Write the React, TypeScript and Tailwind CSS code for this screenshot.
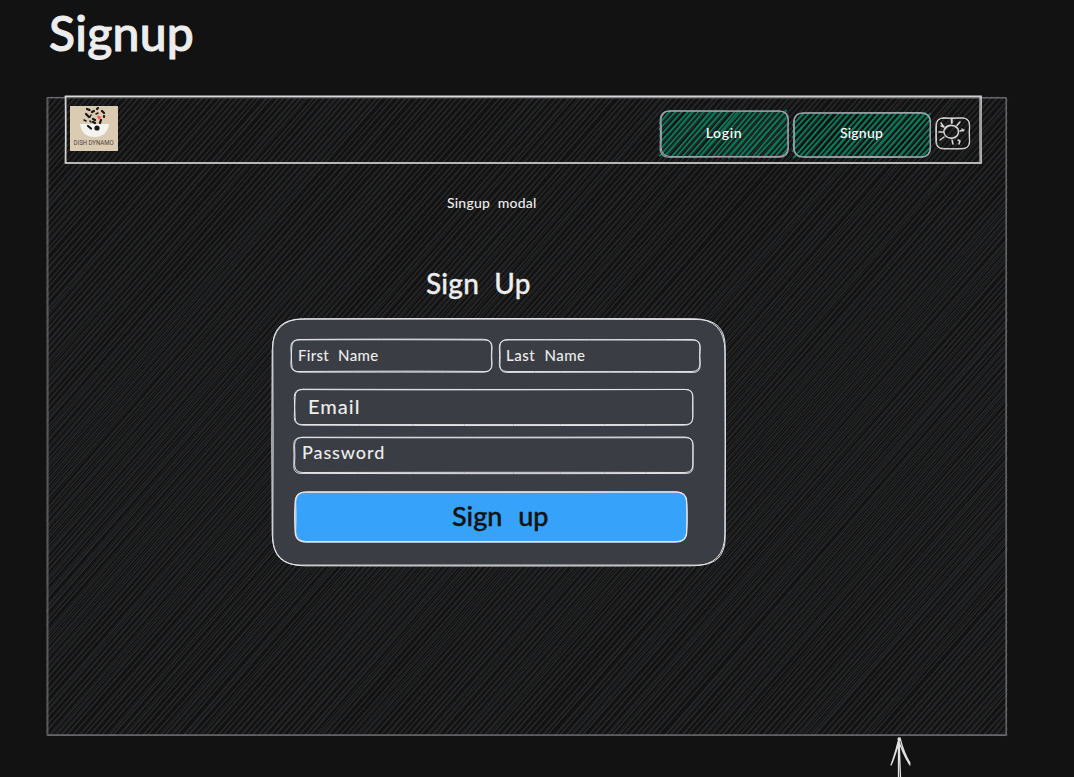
import type { ReactNode } from "react";

const HAND = "font-['Virgil','Excalifont','Lato',cursive] font-medium leading-none whitespace-nowrap";

function rng(seed: number) {
  let s = seed * 7919 + 17;
  return () => {
    s = (s * 16807) % 2147483647;
    return s / 2147483647;
  };
}

function roughRect(w: number, h: number, r: number, seed: number) {
  const rand = rng(seed);
  const j = () => (rand() - 0.5) * 1.5;
  const x0 = 0.5 + j(), x1 = w - 0.2 + j(), y0 = 0.5 + j(), y1 = h - 0.2 + j();
  const f = (n: number) => n.toFixed(1);
  return [
    `M${f(x0 + r)} ${f(y0)}`,
    `Q${f(w * 0.4)} ${f(y0 + j())} ${f(x1 - r)} ${f(y0 + j() * 0.4)}`,
    `Q${f(x1)} ${f(y0)} ${f(x1)} ${f(y0 + r)}`,
    `Q${f(x1 + j())} ${f(h * 0.5)} ${f(x1)} ${f(y1 - r)}`,
    `Q${f(x1)} ${f(y1)} ${f(x1 - r)} ${f(y1)}`,
    `Q${f(w * 0.6)} ${f(y1 + j())} ${f(x0 + r)} ${f(y1)}`,
    `Q${f(x0)} ${f(y1)} ${f(x0)} ${f(y1 - r)}`,
    `Q${f(x0 + j())} ${f(h * 0.5)} ${f(x0)} ${f(y0 + r)}`,
    `Q${f(x0)} ${f(y0)} ${f(x0 + r)} ${f(y0)}`,
  ].join("");
}

function hatchPath(w: number, h: number, gap: number, seed: number, slope: number, skip: number) {
  const rand = rng(seed);
  let d = "";
  for (let x = gap + skip; x < w + h / slope - skip; x += gap) {
    const j = () => (rand() - 0.5) * 1.6;
    const top = x > w ? [w, (x - w) * slope] : [x, 0];
    const bx = x - h / slope;
    const bottom = bx < 0 ? [0, x * slope] : [bx, h];
    d += `M${(top[0] + j()).toFixed(1)} ${(top[1] + j()).toFixed(1)}L${(bottom[0] + j()).toFixed(1)} ${(bottom[1] + j()).toFixed(1)}`;
  }
  return d;
}

type SketchProps = {
  w: number;
  h: number;
  r?: number;
  seed: number;
  stroke?: string;
  width?: number;
  hatch?: string;
  gap?: number;
  hatchWidth?: number;
};

function Sketch({ w, h, r = 0, seed, stroke = "#e3e3e8", width = 1, hatch, gap = 6, hatchWidth = 1 }: SketchProps) {
  const skip = r * 0.5;
  return (
    <svg className="pointer-events-none absolute inset-0 overflow-visible" width={w} height={h} fill="none" strokeLinecap="round">
      {hatch && <path d={hatchPath(w, h, gap, seed, 1.14, skip)} stroke={hatch} strokeWidth={hatchWidth} />}
      {hatch && <path d={hatchPath(w, h, gap, seed + 5, 1.15, skip)} stroke={hatch} strokeWidth={hatchWidth * 0.75} />}
      <path d={roughRect(w, h, r, seed)} stroke={stroke} strokeWidth={width} />
      <path d={roughRect(w, h, r * 1.15, seed + 9)} stroke={stroke} strokeWidth={width} />
    </svg>
  );
}

function Field({ className, children, w, h, seed }: { className: string; children: ReactNode; w: number; h: number; seed: number }) {
  return (
    <label className={`relative flex text-[#ededed] ${className}`}>
      <Sketch w={w} h={h} r={7} seed={seed} />
      {children}
    </label>
  );
}

function Logo() {
  return (
    <div className="flex h-[45px] w-12 shrink-0 flex-col items-center bg-[#dccbb3]">
      <svg width="48" height="33" viewBox="0 0 48 33">
        <path d="M10 18H39C38 27 32 31 24.500 31S11 27 10 18Z" fill="#f4f3f1" />
        <g stroke="#171613" strokeWidth="2.200" strokeLinecap="round" fill="none">
          <path d="M17 3l2.500 1M16 8l3 3M22 6l2-1M28 2l-1 1M32 5l2 2M23 13l2 1M18 20l3 2.500M31 14l-1 3M25 17l-2-1M34 10v1" />
          <path d="M14 14l2 1M21 9l-1 2M26 8l2-1M20 15l1 1" strokeWidth="1.500" />
        </g>
        <circle cx="27" cy="22" r="2.600" fill="#171613" />
        <path d="M27 10.500q2-2 2 0 2-1 2 1l-2 2.500z" fill="#ff5147" />
      </svg>
      <span className="scale-x-[0.93] scale-y-110 font-['Roboto',sans-serif] text-[6.500px] leading-[9px] whitespace-nowrap text-[#4b443b]">DISH DYNAMO</span>
    </div>
  );
}

function Sun() {
  return (
    <svg className="absolute inset-0 overflow-visible" width="34" height="32" fill="none" stroke="#d8d8d8" strokeWidth="1.500" strokeLinecap="round">
      <path d="M10 10C13 7 20 8 22 12 24 18 19 22 14 21 8 20 6 14 10 10ZM9 12C12 7 19 8 21 11" />
      <path d="M15.500 1.500V6M16 2v4M24 5l-3 3.500M24 14l4-1M26 12l1 2M22 23l2 1M24 24l-1 3M16 23l1 4M8 20l-4 3M7 15H3M8 10L5 6M5 9l3 1" />
    </svg>
  );
}

export default function App() {
  return (
    <main className="h-[777px] w-[1074px] overflow-hidden bg-[#121212] text-[#ededed]">
      <header className="h-[97px] pt-[9px] pl-[49px]">
        <h1 className={`${HAND} text-[48px] tracking-[0.3px] [-webkit-text-stroke:1px_currentColor]`}>Signup</h1>
      </header>

      <section className="relative ml-[47px] flex h-[638px] w-[960px] flex-col">
        <Sketch w={960} h={638} seed={3} stroke="#77777a" width={0.8} hatch="#28292b" gap={5.8} hatchWidth={1.3} />

        <nav className="relative -mt-px ml-[18px] flex h-[67px] w-[916px] shrink-0 pt-[10px] pl-[5px]">
          <Sketch w={916} h={67} seed={12} stroke="#dcdcdc" width={1.1} />
          <Logo />
          <button className={`relative mt-[5px] ml-[542px] flex h-[46px] w-32 justify-center pt-[15px] text-white ${HAND} text-[14px] tracking-[0.7px]`}>
            <Sketch w={128} h={46} r={9} seed={21} stroke="#9da3aa" width={1.1} hatch="#087c59" gap={5.8} hatchWidth={1.6} />
            <span className="relative">Login</span>
          </button>
          <button className={`relative mt-[7px] ml-[5px] flex h-[44px] w-[137px] justify-center pt-[13px] text-white ${HAND} text-[14px] tracking-[0.2px]`}>
            <Sketch w={137} h={44} r={9} seed={32} stroke="#9da3aa" width={1.1} hatch="#087c59" gap={5.8} hatchWidth={1.6} />
            <span className="relative">Signup</span>
          </button>
          <button className="relative mt-[11px] ml-[6px] h-8 w-[34px]" aria-label="Theme">
            <Sketch w={34} h={32} r={7} seed={8} stroke="#d8d8d8" />
            <Sun />
          </button>
        </nav>

        <p className={`relative mt-[33px] ml-[400px] ${HAND} text-[14px] tracking-[0.2px] [word-spacing:4px]`}>Singup modal</p>
        <h2 className={`relative mt-[59px] ml-[379px] ${HAND} text-[28px] tracking-[0.2px] [word-spacing:8px] [-webkit-text-stroke:0.3px_currentColor]`}>Sign Up</h2>

        <form className="relative mt-[21px] ml-[225px] flex h-[248px] w-[453px] shrink-0 flex-col rounded-[28px] bg-[#3a3d44] pt-[21px] pl-[19px]">
          <Sketch w={453} h={248} r={28} seed={44} />
          <div className="flex gap-[7px]">
            <Field className="h-[33px] w-[201px] pt-[9px] pl-[7px]" w={201} h={33} seed={50}>
              <span className={`${HAND} text-[15px] tracking-[0.3px] [word-spacing:5px]`}>First Name</span>
            </Field>
            <Field className="h-[33px] w-[201px] pt-[9px] pl-[7px]" w={201} h={33} seed={61}>
              <span className={`${HAND} text-[15px] tracking-[0.5px] [word-spacing:5px]`}>Last Name</span>
            </Field>
          </div>
          <Field className="mt-[17px] ml-[3px] h-[36px] w-[399px] pt-[7px] pl-[14px]" w={399} h={36} seed={70}>
            <span className={`${HAND} text-[20px] tracking-[1px]`}>Email</span>
          </Field>
          <Field className="mt-[12px] ml-[3px] h-[36px] w-[399px] pt-[6px] pl-[8px]" w={399} h={36} seed={81}>
            <span className={`${HAND} text-[18px] tracking-[0.9px]`}>Password</span>
          </Field>
          <button className={`relative mt-[19px] ml-[4px] flex h-[50px] w-[392px] rounded-[10px] bg-[#37a2fa] pt-[10px] pl-[157px] text-[#121212] ${HAND} text-[27px] [word-spacing:9px] [-webkit-text-stroke:0.4px_currentColor]`}>
            <Sketch w={392} h={50} r={10} seed={90} stroke="#e6e3e6" width={1.1} />
            <span className="relative">Sign up</span>
          </button>
        </form>
      </section>

      <svg className="mt-[2px] ml-[887px]" width="28" height="40" fill="none" stroke="#e3e3e3" strokeWidth="1.300" strokeLinecap="round">
        <path d="M11.500 1V40M12 2L13.500 40M12 1Q8 18 4 28M13 1Q9 16 5 26M11 2Q16 17 23 28M13 1Q17 17 23 26" />
      </svg>
    </main>
  );
}
